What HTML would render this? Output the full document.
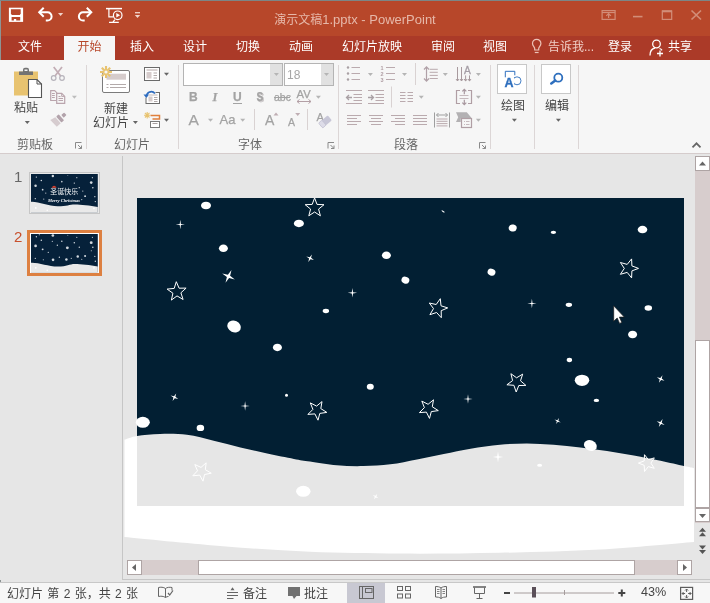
<!DOCTYPE html>
<html lang="zh-CN">
<head>
<meta charset="utf-8">
<title>演示文稿1.pptx - PowerPoint</title>
<style>
*{box-sizing:border-box;margin:0;padding:0}
html,body{width:710px;height:603px;overflow:hidden;background:#e6e6e6}
body{font-family:"Liberation Sans","Noto Sans CJK SC",sans-serif;font-size:12px;color:#444;position:relative}
.abs{position:absolute}
svg{position:absolute;overflow:visible}
#titlebar{left:0;top:0;width:710px;height:36px;background:#b7472a}
#tabrow{left:0;top:36px;width:710px;height:24px;background:#ab3a28}
#title{left:0;top:10.500px;width:710px;text-align:center;color:#e6b8a9;font-size:13px;line-height:18px;white-space:nowrap}
#title span{font-size:12px}
.tab{top:36px;height:24px;line-height:23px;color:#fff;font-size:12px;text-align:center;white-space:nowrap}
.tab.on{background:#f6f6f6;color:#b7472a}
#ribbon{left:0;top:60px;width:710px;height:94px;background:#f6f6f6;border-bottom:1px solid #d5cccc}
.glabel{top:137.500px;font-size:12px;color:#666;line-height:14px;white-space:nowrap;text-align:center}
.gsep{top:64.500px;width:1px;height:84px;background:#dcd6d6}
.rt{font-size:12px;color:#444;line-height:15px;white-space:nowrap;text-align:center}
#work{left:0;top:154px;width:710px;height:426px;background:#e6e6e6}
#status{left:0;top:582px;width:710px;height:21px;background:#f7f7f7;border-top:1px solid #c8c8c8}
.st{top:586px;font-size:12px;color:#444;line-height:15px;white-space:nowrap}
.sbtn{background:#fff;border:1px solid #aea4a4}
.trk{background:#d7cdcd}
.s5{fill:none;stroke:#fff;stroke-width:1}
.s4{fill:#fff}
.d{fill:#fff}
.num{font-size:15px;line-height:16px;color:#666}
</style>
</head>
<body>
<div id="all" style="position:absolute;left:0;top:0;width:710px;height:603px;will-change:transform">
<div id="titlebar" class="abs"></div>
<div id="tabrow" class="abs"></div>
<div id="title" class="abs"><span>演示文稿</span>1.pptx - PowerPoint</div>

<div class="abs tab" style="left:8px;width:44px">文件</div>
<div class="abs tab on" style="left:64px;width:51px">开始</div>
<div class="abs tab" style="left:120px;width:44px">插入</div>
<div class="abs tab" style="left:173px;width:44px">设计</div>
<div class="abs tab" style="left:226px;width:44px">切换</div>
<div class="abs tab" style="left:279px;width:44px">动画</div>
<div class="abs tab" style="left:332px;width:80px">幻灯片放映</div>
<div class="abs tab" style="left:421px;width:44px">审阅</div>
<div class="abs tab" style="left:473px;width:44px">视图</div>
<div class="abs tab" style="left:546px;width:50px;color:#f0cfc6">告诉我...</div>
<div class="abs tab" style="left:598px;width:44px">登录</div>
<div class="abs tab" style="left:665px;width:30px">共享</div>
<svg style="left:0;top:0" width="710" height="59" viewBox="0 0 710 59">
<!-- window borders -->
<rect x="0" y="0" width="710" height="1" fill="#7c8686"/>
<!-- save -->
<rect x="8.900" y="7.700" width="14.200" height="14.200" fill="#fff"/>
<path d="M10.900,9.200h9.800v4.200l-0.900,1.500h-8l-0.900,-1.500z" fill="#b7472a"/>
<path d="M11.600,17.100h8.600v3.400h-4v-1.400h-2.300v1.400h-2.300z" fill="#b7472a"/>
<!-- undo -->
<path d="M39.500,12.300h8a4.100,4.100 0 0 1 0,8.200h-1.700" fill="none" stroke="#fff" stroke-width="2"/>
<path d="M43.700,7.800l-4.500,4.500l4.500,4.500" fill="none" stroke="#fff" stroke-width="2"/>
<path d="M58,12.900h5.200l-2.600,3z" fill="#f1d4cb"/>
<!-- redo -->
<path d="M91,12.300h-8a4.100,4.100 0 0 0 0,8.200h1.700" fill="none" stroke="#fff" stroke-width="2"/>
<path d="M86.800,7.800l4.500,4.500l-4.500,4.500" fill="none" stroke="#fff" stroke-width="2"/>
<!-- slideshow from start -->
<g fill="none" stroke="#fff" stroke-width="1.200">
<path d="M106,8.600h16" stroke-width="1.500"/>
<path d="M108.900,9v7.900h4.200"/>
<path d="M114.800,19.600l-1.800,2.600M109,22.400h9.800"/>
<circle cx="117.700" cy="15.300" r="4.300"/>
</g>
<path d="M116.300,13l3.800,2.300l-3.800,2.300z" fill="#fff"/>
<!-- qat customize -->
<path d="M135,12.700h5" stroke="#f1d4cb" stroke-width="1.300"/>
<path d="M134.800,14.900h5.400l-2.700,3z" fill="#f1d4cb"/>
<!-- window controls -->
<g fill="none" stroke="#d28d78" stroke-width="1.200">
<rect x="602.100" y="10.600" width="13" height="8.800"/>
<path d="M602,12.500h13"/>
<path d="M608.600,18v-4.500M606.300,15.800l2.300,-2.300l2.300,2.300"/>
<path d="M633,16.600h9.500" stroke-width="1.600"/>
<rect x="662.300" y="11" width="9.400" height="8.400"/>
<path d="M662,11.300h10" stroke-width="2"/>
<path d="M691.500,10.500l9.500,9M701,10.500l-9.500,9" stroke-width="1.700"/>
</g>
<!-- lightbulb -->
<g fill="none" stroke="#ecc3b7" stroke-width="1.200">
<path d="M534.700,50v-1.500c0,-1.500 -2.200,-2.500 -2.200,-5a4.200,4.200 0 0 1 8.400,0c0,2.500 -2.200,3.500 -2.200,5v1.500z"/>
<path d="M534.800,52.500h3.800"/>
</g>
<!-- share person -->
<g fill="none" stroke="#fff" stroke-width="1.300">
<circle cx="656.500" cy="44" r="3.800"/>
<path d="M650,55.500c0,-4.500 2.500,-7 5,-7.500"/>
<path d="M659.500,48.500c1,0.300 2,1 2.500,1.800"/>
<path d="M660,50.500v6M657,53.500h6"/>
</g>
</svg>
<div class="abs" style="left:0;top:1px;width:1px;height:602px;background:#8d9494"></div>
<div id="ribbon" class="abs"></div>
<!-- group separators -->
<div class="abs gsep" style="left:86px"></div>
<div class="abs gsep" style="left:178px"></div>
<div class="abs gsep" style="left:338px"></div>
<div class="abs gsep" style="left:490px"></div>
<div class="abs gsep" style="left:534px"></div>
<div class="abs gsep" style="left:578px"></div>
<!-- labels -->
<div class="abs rt" style="left:5px;top:101.300px;width:42px">粘贴</div>
<div class="abs rt" style="left:90px;top:101.500px;width:52px">新建</div>
<div class="abs rt" style="left:92px;top:116.300px;width:38px">幻灯片</div>
<div class="abs rt" style="left:492px;top:99.300px;width:42px">绘图</div>
<div class="abs rt" style="left:536px;top:99.300px;width:42px">编辑</div>
<div class="abs glabel" style="left:14px;width:42px">剪贴板</div>
<div class="abs glabel" style="left:111px;width:42px">幻灯片</div>
<div class="abs glabel" style="left:235px;width:30px">字体</div>
<div class="abs glabel" style="left:391px;width:30px">段落</div>
<!-- font boxes -->
<div class="abs" style="left:183px;top:63px;width:100px;height:23px;background:#fff;border:1px solid #b4b4b4"></div>
<div class="abs" style="left:270px;top:64px;width:12px;height:21px;background:#e1e1e1"></div>
<div class="abs" style="left:284px;top:63px;width:50px;height:23px;background:#fff;border:1px solid #b4b4b4"></div>
<div class="abs" style="left:321px;top:64px;width:12px;height:21px;background:#e1e1e1"></div>
<div class="abs" style="left:287px;top:67.500px;font-size:12px;line-height:15px;color:#a6a6a6">18</div>
<!-- big buttons -->
<div class="abs" style="left:497px;top:64px;width:30px;height:30px;background:#fff;border:1px solid #c8c8c8"></div>
<div class="abs" style="left:541px;top:64px;width:30px;height:30px;background:#fff;border:1px solid #c8c8c8"></div>
<svg style="left:0;top:59px" width="710" height="95" viewBox="0 59 710 95">
<defs>
<path id="dd" d="M-2.500,-1.500h5l-2.500,3z"/>
<g id="dl"><path d="M0.500,6.500v-6h6" fill="none" stroke="#8a8a8a" stroke-width="1"/><path d="M3,3l3.500,3.500M6.500,3.500v3h-3" fill="none" stroke="#8a8a8a" stroke-width="1"/></g>
</defs>
<!-- paste -->
<rect x="14" y="71.500" width="24" height="24" fill="#e8c370"/>
<path d="M19,75v-3.500h4v-1.800a2,2 0 0 1 2,-2h2a2,2 0 0 1 2,2v1.800h4v3.500z" fill="#737373"/>
<rect x="24.500" y="69.500" width="3" height="1.500" fill="#f6f6f6"/>
<path d="M28.500,79.500h8.500l4.500,4.500v13.500h-13z" fill="#fff" stroke="#555" stroke-width="1.100"/>
<path d="M37,79.500v4.500h4.500" fill="none" stroke="#555" stroke-width="1"/>
<use href="#dd" x="27.300" y="122.500" fill="#666"/>
<!-- cut -->
<g fill="none" stroke="#c2adb5" stroke-width="1.700">
<path d="M53.700,67l7,9M62,67l-7,9"/></g>
<g fill="none" stroke="#b6b3bb" stroke-width="1.200"><circle cx="53.700" cy="78" r="2.300"/><circle cx="62" cy="78" r="2.300"/></g>
<!-- copy -->
<g fill="#f6f6f6" stroke="#baa5ad" stroke-width="1.200">
<path d="M50.700,90.700h4l2,2v7.800h-6z"/>
<path d="M56.700,93.400h5l3,3v7h-8z"/>
<path d="M61.700,93.400v3h3" fill="none" stroke-width="1"/>
<path d="M52,93.500h2.800M52,95.500h2.800M52,97.500h2.800M58.500,96.500h2M58.500,98.500h4.500M58.500,100.500h4.500" fill="none" stroke-width="1"/>
</g>
<use href="#dd" x="74.400" y="97.200" fill="#bdbdbd"/>
<!-- format painter -->
<g transform="translate(59.500 119) rotate(-42)"><rect x="4" y="-1.800" width="3.800" height="3.600" rx="0.700" fill="#b3a3ab"/><rect x="-0.900" y="-4" width="3.500" height="8" rx="0.800" fill="#b3a3ab"/><path d="M-2,-4v8h-5.200l-0.300,-9.500z" fill="#d6cccf"/></g>
<use href="#dl" x="75" y="142"/>
<!-- new slide -->
<rect x="102.500" y="70.500" width="27" height="22" rx="1.500" fill="#fff" stroke="#7b7b7b" stroke-width="1"/>
<rect x="106.500" y="73.700" width="19.500" height="6" fill="#d6cccc"/>
<path d="M106.500,84.500h2M110,84.500h16M106.500,87.500h2M110,87.500h16" stroke="#b3aaaa" stroke-width="1"/>
<g stroke="#e8c370" stroke-width="2.100"><circle cx="106" cy="72" r="3.500" fill="#f6f6f6" stroke="none"/><path d="M106,66v12M100,72h12M101.800,67.800l8.400,8.400M110.200,67.800l-8.400,8.400"/></g>
<circle cx="106" cy="72" r="1.600" fill="#f6f6f6"/>
<use href="#dd" x="135.400" y="122.500" fill="#666"/>
<!-- layout -->
<rect x="144.500" y="67.500" width="15" height="13" fill="#fff" stroke="#6a6a6a" stroke-width="1"/>
<rect x="146.500" y="72" width="5" height="6.500" fill="#d6cccc"/>
<rect x="146.500" y="69.200" width="11" height="1.600" fill="#d0c7c7"/><path d="M153.500,73h3.500M153.500,75.500h3.500M153.500,78h3.500" stroke="#b0a8a8" stroke-width="1"/>
<use href="#dd" x="166.500" y="74.200" fill="#666"/>
<!-- reset -->
<rect x="146" y="92.500" width="13.500" height="11" fill="#fff" stroke="#6a6a6a" stroke-width="1"/>
<rect x="148.500" y="96.500" width="4" height="5" fill="#d6cccc"/>
<path d="M148.500,95h9" stroke="#d0c7c7" stroke-width="1.300"/><path d="M154,97.500h3.500M154,99.500h3.500M154,101.500h3.500" stroke="#b0a8a8" stroke-width="1"/>
<path d="M146,97.500v-2.500a4,4 0 0 1 8,-1" fill="none" stroke="#f6f6f6" stroke-width="4"/>
<path d="M146.500,96.500c0,-4.500 5.500,-6.500 8.500,-3" fill="none" stroke="#2d6cc0" stroke-width="1.600"/>
<path d="M143.500,94.500h5.500l-2.700,3.500z" fill="#2d6cc0"/>
<!-- section -->
<path d="M150.500,115.500h9v3.500h-7" fill="none" stroke="#e07f3c" stroke-width="1.500"/>
<rect x="150.500" y="121.500" width="9" height="6" fill="#fff" stroke="#7a7a7a" stroke-width="1"/>
<path d="M152.500,123.500h5" stroke="#a9a0a0" stroke-width="1"/>
<g stroke="#e8c370" stroke-width="1.100"><path d="M147.200,112v6.400M144,115.200h6.400M144.900,112.900l4.600,4.600M149.500,112.900l-4.600,4.600"/></g>
<use href="#dd" x="166.500" y="120.200" fill="#666"/>
<!-- font box arrows -->
<use href="#dd" x="276.400" y="74.500" fill="#b5b5b5"/>
<use href="#dd" x="326.500" y="74.500" fill="#b5b5b5"/>
<!-- font row 2 -->
<g font-family="'Liberation Sans',sans-serif" fill="#a3a3a3" stroke="#a3a3a3" stroke-width="0.250">
<text x="189" y="101" font-size="12" font-weight="bold">B</text>
<text x="212.500" y="101" font-size="12.500" font-style="italic" font-weight="bold" font-family="'Liberation Serif',serif">I</text>
<text x="233" y="101" font-size="12" font-weight="bold">U</text>
<text x="257.600" y="102.200" font-size="12.300" font-weight="bold" fill="#d8d3d5" textLength="6.800" lengthAdjust="spacingAndGlyphs">S</text>
<text x="256.500" y="101" font-size="12.300" font-weight="bold" textLength="6.800" lengthAdjust="spacingAndGlyphs">S</text>
<text x="274" y="101" font-size="10.500">abc</text>
<text x="296.500" y="97.800" font-size="11.200">AV</text>
<text x="188.500" y="124.600" font-size="15.500">A</text>
<text x="219.500" y="124.300" font-size="13">Aa</text>
<text x="265" y="125.400" font-size="14">A</text>
<text x="288" y="125.500" font-size="10.500">A</text>
<text x="316.500" y="120.500" font-size="11">A</text>
</g>
<path d="M233,103.500h9" stroke="#a3a3a3" stroke-width="1"/>
<path d="M274,97.500h16" stroke="#a3a3a3" stroke-width="1"/>
<path d="M297,101.500h14M299.500,99.500l-2.500,2l2.500,2M308.500,99.500l2.500,2l-2.500,2" fill="none" stroke="#b39fa5" stroke-width="1"/>
<use href="#dd" x="318.400" y="97.200" fill="#b5b5b5"/>
<use href="#dd" x="210.500" y="120.200" fill="#b5b5b5"/>
<use href="#dd" x="242.700" y="120.200" fill="#b5b5b5"/>
<path d="M273.500,115.500h5l-2.500,-3z" fill="#bfaeb3"/>
<path d="M295.200,113h5l-2.500,3z" fill="#bfaeb3"/>
<path d="M254.500,109v21M307.500,109v21" stroke="#d9d2d2" stroke-width="1"/>
<g transform="rotate(-40 325 121.500)"><rect x="319" y="118.500" width="12" height="6.500" rx="1" fill="#c8c7d7"/><rect x="319" y="118.500" width="4.500" height="6.500" rx="1" fill="#dddce8" stroke="#c0bfd0" stroke-width="0.600"/></g>
<use href="#dl" x="327.500" y="142"/>
<!-- paragraph row 1 -->
<g stroke="#baaaae" stroke-width="1" fill="none">
<path d="M351.500,67.500h8.500M351.500,73.500h8.500M351.500,79.500h8.500"/>
<path d="M386,67.500h9M386,73.500h9M386,79.500h9"/>
<path d="M429.600,69.300h8.200M429.600,72.300h8.200M429.600,75.400h8.200M429.600,78.500h8.200"/>
</g>
<g fill="#a9a0a4"><circle cx="348" cy="67.500" r="1.200"/><circle cx="348" cy="73.500" r="1.200"/><circle cx="348" cy="79.500" r="1.200"/></g>
<g font-family="'Liberation Sans',sans-serif" font-size="5.500" font-weight="bold" fill="#b09ea4"><text x="380.500" y="69.500">1</text><text x="380.500" y="75.500">2</text><text x="380.500" y="81.500">3</text></g>
<use href="#dd" x="370.400" y="74.500" fill="#b5b5b5"/>
<use href="#dd" x="404.500" y="74.500" fill="#b5b5b5"/>
<path d="M415.500,63v22" stroke="#d9d2d2" stroke-width="1"/>
<path d="M426.500,67v14M424,69.500l2.500,-2.700l2.500,2.700M424,78.500l2.500,2.700l2.500,-2.700" fill="none" stroke="#b0a0a7" stroke-width="1.200"/>
<use href="#dd" x="445.300" y="74.500" fill="#b5b5b5"/>
<!-- text direction -->
<g fill="none" stroke="#a89a9e" stroke-width="1">
<path d="M457.500,67v14M461.500,67v14M456,79l1.500,2l1.500,-2M460,79l1.500,2l1.500,-2"/>
<path d="M465.600,75.400v5.800M469.500,75.400v5.800M464.100,79l1.500,2l1.500,-2M468,79l1.500,2l1.500,-2"/>
</g>
<text x="464" y="73.600" font-family="'Liberation Sans',sans-serif" font-size="10.200" fill="#a59ea6" stroke="#a59ea6" stroke-width="0.300">A</text>
<use href="#dd" x="478.400" y="74.500" fill="#b5b5b5"/>
<!-- paragraph row 2 -->
<g stroke="#baaaae" stroke-width="1" fill="none">
<path d="M346,90.500h16M353.500,94.500h8.500M353.500,97.500h8.500M353.500,100.500h8.500M346,103.500h16"/>
<path d="M368,90.500h16M375.500,94.500h8.500M375.500,97.500h8.500M375.500,100.500h8.500M368,103.500h16"/>
<path d="M400,92.500h5.500M407.500,92.500h5.500M400,95.500h5.500M407.500,95.500h5.500M400,98.500h5.500M407.500,98.500h5.500M400,101.500h5.500M407.500,101.500h5.500"/>
</g>
<g stroke="#a9a0a4" stroke-width="1.300" fill="none"><path d="M346.500,97.500h5.500M349,95l-2.500,2.500l2.500,2.500"/><path d="M368,97.500h5.500M371,95l2.500,2.500l-2.500,2.500"/></g>
<path d="M391.500,86.500v21" stroke="#d9d2d2" stroke-width="1"/>
<use href="#dd" x="421.300" y="97.200" fill="#b5b5b5"/>
<!-- align text -->
<g fill="none" stroke="#b09ea4" stroke-width="1.200">
<path d="M460,90.500h-3.500v13h3.500M468,90.500h3.500v13h-3.500"/>
</g>
<g fill="none" stroke="#a8989f" stroke-width="1.200"><path d="M464.300,89.300v5M462.300,91.300l2,-2l2,2M464.300,104.700v-5M462.300,102.700l2,2l2,-2"/><path d="M459.500,95.500h9M459.500,98.500h9" stroke="#c6babd"/></g>
<use href="#dd" x="478.400" y="97.200" fill="#b5b5b5"/>
<!-- paragraph row 3 -->
<g stroke="#baaaae" stroke-width="1" fill="none">
<path d="M347,115.500h14M347,118.500h10M347,121.500h14M347,124.500h10"/>
<path d="M369,115.500h14M371,118.500h10M369,121.500h14M371,124.500h10"/>
<path d="M391,115.500h14M395,118.500h10M391,121.500h14M395,124.500h10"/>
<path d="M413,115.500h14M413,118.500h14M413,121.500h14M413,124.500h14"/>
<path d="M436.500,119h11M436.500,121.300h11M436.500,123.600h11M436.500,125.900h11"/>
</g>
<g stroke="#9f9f9f" stroke-width="1" fill="none"><path d="M434.500,112.500v15M449.500,112.500v15"/><path d="M436.500,115h11M438.500,113l-2,2l2,2M445.500,113l2,2l-2,2"/></g>
<!-- smartart -->
<path d="M456,112.300h10.800l4.400,5.200v1h-10.500v3.500h-4.700l2.200,-4.800z" fill="#b3b1b3"/>
<rect x="461.500" y="118.500" width="10" height="9" fill="#f6f6f6" stroke="#b09ea4" stroke-width="1.200"/>
<path d="M464,121.500h1M466,121.500h3.500M464,124.500h1M466,124.500h3.500" stroke="#c6babd" stroke-width="1"/>
<use href="#dd" x="478.400" y="120.200" fill="#b5b5b5"/>
<use href="#dl" x="479" y="142"/>
<!-- drawing -->
<path d="M505.300,79.700v-8.400h9.500v4" fill="none" stroke="#2e6fbe" stroke-width="1"/>
<circle cx="517" cy="80.800" r="4" fill="none" stroke="#2e6fbe" stroke-width="0.900"/>
<rect x="504" y="77.300" width="10" height="10" fill="#fff"/>
<text x="504.600" y="86.800" font-family="'Liberation Sans',sans-serif" font-size="12.500" font-weight="bold" fill="#2e6fbe" stroke="#2e6fbe" stroke-width="0.350">A</text>
<use href="#dd" x="514.400" y="120.200" fill="#666"/>
<!-- editing -->
<circle cx="558.300" cy="77.700" r="4" fill="none" stroke="#2e6fbe" stroke-width="1.800"/>
<path d="M555.300,80.500l-4,3" stroke="#2e6fbe" stroke-width="2.600" stroke-linecap="round"/>
<use href="#dd" x="558.400" y="120.200" fill="#666"/>
<!-- collapse -->
<path d="M692.500,147.300l4,-4l4,4" fill="none" stroke="#666" stroke-width="1.800"/>
</svg>
<div id="work" class="abs"></div>
<!-- thumbnail panel -->
<div class="abs" style="left:122px;top:156px;width:1px;height:424px;background:#c6c6c6"></div>
<div class="abs" style="left:122px;top:579px;width:588px;height:1px;background:#c6c6c6"></div>
<div class="abs num" style="left:14px;top:169px">1</div>
<div class="abs num" style="left:14px;top:229px;color:#c8502d">2</div>
<div class="abs" style="left:29px;top:172px;width:71px;height:42px;background:#e9e9e9;border:1px solid #c6c6c6"></div>
<div class="abs" style="left:27px;top:230px;width:75px;height:46px;background:#fff;border:3px solid #dd8041"></div>
<svg style="left:31.200px;top:173.900px" width="66.800" height="38.200" viewBox="0 0 70 40" preserveAspectRatio="none">
<rect width="70" height="40" fill="#06213a"/>
<path d="M0,29.200C8,28.800 18,33.900 28,33.900S40,31.900 46,31.900S62,33 70,34.500V40H0Z" fill="#e9e9e9"/>
<g fill="#d2d8de"><circle cx="4.8" cy="12.2" r="1.3"/><circle cx="22.9" cy="2.2" r="1.3"/><circle cx="63.1" cy="9.0" r="1.4"/><circle cx="12.2" cy="16.4" r="0.9"/><circle cx="56.7" cy="23.2" r="1.0"/><circle cx="10.8" cy="6.9" r="0.8"/><circle cx="5.6" cy="3.2" r="0.7"/><circle cx="32.3" cy="8.0" r="0.8"/><circle cx="45.4" cy="9.5" r="0.7"/><circle cx="50.6" cy="14.3" r="0.7"/><circle cx="64.8" cy="14.3" r="0.8"/><circle cx="66.9" cy="23.7" r="0.7"/><circle cx="48.0" cy="3.8" r="0.6"/><circle cx="4.5" cy="25.8" r="0.7"/><circle cx="13.4" cy="26.3" r="0.6"/><circle cx="53.2" cy="26.8" r="0.6"/><circle cx="67.4" cy="28.9" r="0.7"/><circle cx="38.6" cy="1.7" r="0.5"/><circle cx="64.3" cy="3.8" r="0.6"/><circle cx="15.5" cy="20.0" r="0.6"/><circle cx="54.3" cy="17.9" r="0.6"/></g>
<g fill="#fff"><circle cx="5" cy="35.500" r="0.900"/><circle cx="17" cy="38" r="0.800"/><circle cx="66" cy="36" r="0.900"/></g>
<path d="M21.500,14.500q2.700,-4.600 5.400,0z" fill="#d8402f"/>
<text x="20.100" y="21.300" font-size="7.300" fill="#f2f4f6" textLength="29.300" lengthAdjust="spacingAndGlyphs" font-family="'Liberation Sans','Noto Sans CJK SC',sans-serif">圣诞快乐</text>
<text x="17.700" y="28.900" font-size="4.800" fill="#f2f4f6" font-style="italic" font-weight="bold" textLength="33.700" lengthAdjust="spacingAndGlyphs" font-family="'Liberation Serif',serif">Merry Christmas</text>
</svg>
<svg style="left:31.200px;top:234.200px" width="66.800" height="37.600" viewBox="0 0 70 39.400" preserveAspectRatio="none">
<rect width="70" height="40" fill="#06213a"/>
<path d="M0,30.100C8,29.700 18,34.100 28,34.100S40,31.400 46,31.400S62,32.500 70,34.100V40H0Z" fill="#e9e9e9"/>
<g fill="#d2d8de"><circle cx="4.8" cy="12.5" r="1.4"/><circle cx="22.9" cy="1.6" r="1.4"/><circle cx="38.1" cy="14.5" r="1.5"/><circle cx="63.1" cy="9.1" r="1.5"/><circle cx="12.2" cy="16.1" r="1.0"/><circle cx="23.1" cy="27.1" r="1.4"/><circle cx="37.1" cy="26.8" r="1.3"/><circle cx="49.0" cy="23.7" r="1.3"/><circle cx="56.7" cy="23.1" r="1.1"/><circle cx="10.8" cy="6.5" r="0.8"/><circle cx="5.6" cy="2.9" r="0.7"/><circle cx="8.7" cy="0.8" r="0.6"/><circle cx="32.3" cy="7.7" r="0.8"/><circle cx="45.4" cy="9.2" r="0.8"/><circle cx="27.6" cy="11.8" r="0.7"/><circle cx="18.1" cy="19.2" r="0.7"/><circle cx="29.7" cy="24.4" r="0.7"/><circle cx="50.6" cy="13.9" r="0.7"/><circle cx="64.8" cy="13.9" r="0.8"/><circle cx="66.9" cy="23.4" r="0.7"/><circle cx="63.2" cy="17.6" r="0.6"/><circle cx="48.0" cy="3.5" r="0.6"/><circle cx="4.5" cy="25.5" r="0.7"/><circle cx="12.9" cy="27.0" r="0.6"/><circle cx="42.2" cy="25.5" r="0.6"/><circle cx="53.2" cy="26.5" r="0.6"/><circle cx="67.4" cy="28.6" r="0.7"/><circle cx="22.3" cy="7.7" r="0.6"/><circle cx="38.6" cy="1.4" r="0.5"/><circle cx="64.3" cy="3.5" r="0.6"/></g>
<g fill="#fff"><circle cx="5" cy="35.500" r="0.900"/><circle cx="17" cy="38" r="0.800"/><circle cx="66" cy="35.500" r="0.900"/></g>
</svg>
<!-- slide + snow -->
<svg style="left:0;top:0" width="710" height="603" viewBox="0 0 710 603">
<defs><clipPath id="sc"><rect x="137" y="198" width="547" height="308"/></clipPath></defs>
<path d="M124.5,439.6C126.6,439.0 131.2,436.8 137.1,435.9C143.0,435.0 151.8,434.2 160.1,434.0C168.4,433.8 178.0,433.7 186.9,434.8C195.8,435.9 204.8,438.6 213.7,440.7C222.6,442.8 231.5,445.3 240.4,447.4C249.3,449.5 258.3,451.6 267.2,453.5C276.1,455.4 286.8,457.5 293.9,458.9C301.0,460.2 302.9,460.5 310.0,461.6C317.1,462.7 327.9,464.6 336.8,465.3C345.7,466.1 354.6,466.3 363.5,466.1C372.4,465.9 381.4,465.4 390.3,464.3C399.2,463.2 408.1,461.1 417.0,459.4C425.9,457.7 434.9,455.9 443.8,454.1C452.7,452.3 461.2,450.3 470.6,448.7C480.0,447.1 490.6,445.6 500.0,444.7C509.4,443.8 517.9,443.4 526.8,443.4C535.7,443.4 544.6,444.0 553.5,444.7C562.4,445.4 571.4,446.4 580.3,447.4C589.2,448.4 598.1,449.6 607.0,450.9C615.9,452.2 624.9,453.8 633.8,455.4C642.7,457.0 652.2,459.0 660.6,460.8C669.0,462.6 678.5,464.9 684.1,466.1C689.7,467.3 692.4,467.9 694.0,468.2L694.0,542.0C678.3,543.2 632.3,547.7 600.0,549.5C567.7,551.3 533.3,552.1 500.0,552.8C466.7,553.5 431.7,553.8 400.0,553.6C368.3,553.4 340.0,553.1 310.0,551.8C280.0,550.5 250.9,548.5 220.0,546.0C189.1,543.5 140.4,538.5 124.5,537.0Z" fill="#fff"/>
<rect x="137" y="198" width="547" height="308" fill="#021f33"/>
<path d="M124.5,439.6C126.6,439.0 131.2,436.8 137.1,435.9C143.0,435.0 151.8,434.2 160.1,434.0C168.4,433.8 178.0,433.7 186.9,434.8C195.8,435.9 204.8,438.6 213.7,440.7C222.6,442.8 231.5,445.3 240.4,447.4C249.3,449.5 258.3,451.6 267.2,453.5C276.1,455.4 286.8,457.5 293.9,458.9C301.0,460.2 302.9,460.5 310.0,461.6C317.1,462.7 327.9,464.6 336.8,465.3C345.7,466.1 354.6,466.3 363.5,466.1C372.4,465.9 381.4,465.4 390.3,464.3C399.2,463.2 408.1,461.1 417.0,459.4C425.9,457.7 434.9,455.9 443.8,454.1C452.7,452.3 461.2,450.3 470.6,448.7C480.0,447.1 490.6,445.6 500.0,444.7C509.4,443.8 517.9,443.4 526.8,443.4C535.7,443.4 544.6,444.0 553.5,444.7C562.4,445.4 571.4,446.4 580.3,447.4C589.2,448.4 598.1,449.6 607.0,450.9C615.9,452.2 624.9,453.8 633.8,455.4C642.7,457.0 652.2,459.0 660.6,460.8C669.0,462.6 678.5,464.9 684.1,466.1C689.7,467.3 692.4,467.9 694.0,468.2L694.0,542.0C678.3,543.2 632.3,547.7 600.0,549.5C567.7,551.3 533.3,552.1 500.0,552.8C466.7,553.5 431.7,553.8 400.0,553.6C368.3,553.4 340.0,553.1 310.0,551.8C280.0,550.5 250.9,548.5 220.0,546.0C189.1,543.5 140.4,538.5 124.5,537.0Z" fill="#e6e6e6" clip-path="url(#sc)"/>
<ellipse class="d" cx="206" cy="205.5" rx="5" ry="3.75"/>
<ellipse class="d" cx="298.9" cy="223.4" rx="5" ry="3.75"/>
<ellipse class="d" cx="223.4" cy="248.3" rx="4.5" ry="3.75"/>
<ellipse class="d" cx="386.4" cy="255.3" rx="4.5" ry="3.75"/>
<ellipse class="d" cx="405.4" cy="280.2" rx="4" ry="3.4" transform="rotate(20 405.4 280.2)"/>
<ellipse class="d" cx="491.5" cy="272.2" rx="4" ry="3.4" transform="rotate(20 491.5 272.2)"/>
<ellipse class="d" cx="325.9" cy="311" rx="3.2" ry="2.15"/>
<ellipse class="d" cx="512.7" cy="228" rx="4" ry="3.5" transform="rotate(15 512.7 228)"/>
<ellipse class="d" cx="553.4" cy="232.3" rx="2.7" ry="1.6"/>
<ellipse class="d" cx="642.5" cy="229.6" rx="4.8" ry="3.75"/>
<ellipse class="d" cx="568.9" cy="304.8" rx="3.2" ry="2.15"/>
<ellipse class="d" cx="648.3" cy="308" rx="3.75" ry="2.7"/>
<ellipse class="d" cx="234.1" cy="326.5" rx="7" ry="5.75" transform="rotate(25 234.1 326.5)"/>
<ellipse class="d" cx="277.4" cy="347.4" rx="4.5" ry="3.75"/>
<ellipse class="d" cx="286.5" cy="395.3" rx="1.5" ry="1.5"/>
<ellipse class="d" cx="142.8" cy="422.3" rx="7" ry="5.5"/>
<ellipse class="d" cx="200.4" cy="427.9" rx="3.75" ry="3.2"/>
<ellipse class="d" cx="370.3" cy="386.7" rx="3.5" ry="3"/>
<ellipse class="d" cx="632.6" cy="334.5" rx="4.5" ry="3.75"/>
<ellipse class="d" cx="569.4" cy="360" rx="2.7" ry="2.15"/>
<ellipse class="d" cx="582" cy="380.3" rx="7.25" ry="5.6"/>
<ellipse class="d" cx="596.4" cy="400.4" rx="2.7" ry="1.6"/>
<ellipse class="d" cx="303.3" cy="491.3" rx="7.25" ry="5.5"/>
<ellipse class="d" cx="590.4" cy="445.5" rx="6.7" ry="5.25" transform="rotate(25 590.4 445.5)"/>
<ellipse class="d" cx="539.6" cy="465.3" rx="2.5" ry="1.5"/>
<ellipse class="d" cx="443.1" cy="211.4" rx="1.8" ry="0.6" transform="rotate(30 443.1 211.4)"/>
<polygon class="s4" points="180.3,219.8 180.9,223.9 185.0,224.5 180.9,225.1 180.3,229.2 179.7,225.1 175.6,224.5 179.7,223.9"/>
<polygon class="s4" points="352.4,288.1 353.0,292.2 357.1,292.8 353.0,293.4 352.4,297.5 351.8,293.4 347.7,292.8 351.8,292.2"/>
<polygon class="s4" points="531.9,298.8 532.5,302.9 536.6,303.5 532.5,304.1 531.9,308.2 531.3,304.1 527.2,303.5 531.3,302.9"/>
<polygon class="s4" points="245.1,401.3 245.7,405.4 249.8,406.0 245.7,406.6 245.1,410.7 244.5,406.6 240.4,406.0 244.5,405.4"/>
<polygon class="s4" points="468.0,394.3 468.6,398.4 472.7,399.0 468.6,399.6 468.0,403.7 467.4,399.6 463.3,399.0 467.4,398.4"/>
<polygon class="s4" points="498.0,451.6 498.8,456.2 503.4,457.0 498.8,457.8 498.0,462.4 497.2,457.8 492.6,457.0 497.2,456.2"/>
<polygon class="s4" points="311.9,254.4 311.1,257.8 313.9,260.0 310.5,259.2 308.3,262.0 309.1,258.6 306.3,256.4 309.7,257.2"/>
<polygon class="s4" points="231.5,270.1 230.1,275.8 234.8,279.4 229.1,278.0 225.5,282.7 226.9,277.0 222.2,273.4 227.9,274.8"/>
<polygon class="s4" points="176.2,393.4 175.4,396.8 178.2,399.0 174.8,398.2 172.6,401.0 173.4,397.6 170.6,395.4 174.0,396.2"/>
<polygon class="s4" points="662.5,375.2 661.7,378.6 664.5,380.8 661.1,380.0 658.9,382.8 659.7,379.4 656.9,377.2 660.3,378.0"/>
<polygon class="s4" points="559.0,417.9 558.4,420.7 560.7,422.4 557.9,421.8 556.2,424.1 556.8,421.3 554.5,419.6 557.3,420.2"/>
<polygon class="s4" points="662.6,419.1 661.7,422.7 664.7,425.0 661.1,424.1 658.8,427.1 659.7,423.5 656.7,421.2 660.3,422.1"/>
<polygon class="s4" points="377.3,493.7 376.4,496.4 378.5,498.3 375.8,497.4 373.9,499.5 374.8,496.8 372.7,494.9 375.4,495.8"/>
<polygon class="s5" points="176.3,281.7 179.1,288.2 186.1,288.1 180.9,292.8 183.1,299.5 177.0,295.9 171.4,300.1 172.9,293.2 167.1,289.1 174.2,288.4"/>
<polygon class="s5" points="314.6,197.9 317.0,204.4 324.0,204.7 318.6,209.1 320.4,215.8 314.6,212.0 308.8,215.8 310.6,209.1 305.2,204.7 312.2,204.4"/>
<polygon class="s5" points="440.3,298.7 441.0,305.8 447.7,307.9 441.2,310.7 441.3,317.7 436.6,312.5 429.9,314.7 433.5,308.6 429.3,303.0 436.2,304.5"/>
<polygon class="s5" points="631.6,258.9 631.9,265.9 638.5,268.4 631.9,270.9 631.6,277.9 627.2,272.4 620.4,274.3 624.3,268.4 620.4,262.5 627.2,264.4"/>
<polygon class="s5" points="322.0,401.6 320.8,408.6 326.8,412.4 319.8,413.4 318.0,420.2 314.9,413.9 307.9,414.4 312.9,409.4 310.3,402.9 316.6,406.1"/>
<polygon class="s5" points="433.5,399.8 432.3,406.8 438.3,410.6 431.3,411.6 429.5,418.4 426.4,412.1 419.4,412.6 424.4,407.6 421.8,401.1 428.1,404.3"/>
<polygon class="s5" points="522.7,374.1 520.5,380.8 525.9,385.4 518.8,385.5 516.2,392.0 513.9,385.3 506.9,384.8 512.6,380.6 510.9,373.7 516.6,377.8"/>
<polygon class="s5" points="206.2,462.8 205.3,469.7 211.3,473.2 204.5,474.5 203.0,481.2 199.7,475.1 192.8,475.8 197.5,470.8 194.8,464.5 201.0,467.4"/>
<polygon class="s5" points="644.5,454.7 648.3,459.6 654.3,457.9 650.9,463.1 654.3,468.3 648.3,466.6 644.5,471.5 644.2,465.3 638.4,463.1 644.2,460.9"/>
<path d="M613.700,305.800V321.300L617.200,318L619.600,323.400L621.800,322.400L619.400,317.100H624.300Z" fill="#fff" stroke="#1a1a1a" stroke-width="0.700"/>
</svg>
<!-- vertical scrollbar -->
<div class="abs trk" style="left:695px;top:156px;width:15px;height:367px"></div>
<div class="abs sbtn" style="left:695px;top:156px;width:15px;height:15px"></div>
<div class="abs sbtn" style="left:695px;top:340px;width:15px;height:167.500px"></div>
<div class="abs sbtn" style="left:695px;top:508.300px;width:15px;height:14.200px"></div>
<svg style="left:695px;top:156px" width="15" height="400" viewBox="0 0 15 400">
<path d="M4,9.500L7.500,5.500L11,9.500Z" fill="#666"/>
<path d="M4,358L7.500,362L11,358Z" fill="#666"/>
<path d="M4,375.700L7.500,371.700L11,375.700ZM4,380.200L7.500,376.200L11,380.200Z" fill="#555"/>
<path d="M4,389.500L7.500,393.500L11,389.500ZM4,394L7.500,398L11,394Z" fill="#555"/>
</svg>
<!-- horizontal scrollbar -->
<div class="abs trk" style="left:127px;top:560px;width:565px;height:15px"></div>
<div class="abs sbtn" style="left:127px;top:560px;width:15px;height:15px"></div>
<div class="abs sbtn" style="left:198px;top:560px;width:437px;height:15px"></div>
<div class="abs sbtn" style="left:677px;top:560px;width:15px;height:15px"></div>
<svg style="left:127px;top:560px" width="565" height="15" viewBox="0 0 565 15">
<path d="M9,4L5,7.500L9,11Z" fill="#666"/>
<path d="M556,4L560,7.500L556,11Z" fill="#666"/>
</svg>
<div id="status" class="abs"></div>
<div class="abs" style="left:347px;top:583px;width:38px;height:20px;background:#c8c8d2"></div>
<div class="abs st" style="left:7px;top:587.300px;word-spacing:1px">幻灯片 第 2 张，共 2 张</div>
<div class="abs st" style="left:243px;top:587px">备注</div>
<div class="abs st" style="left:304px;top:587px">批注</div>
<div class="abs st" style="left:641px;top:585.200px;font-size:12.600px">43%</div>
<svg style="left:0;top:582px" width="710" height="21" viewBox="0 582 710 21">
<!-- spell book -->
<g fill="none" stroke="#666" stroke-width="1">
<path d="M165.500,588.500c-2,-1.500 -5,-1.500 -7,-1v9c2,-0.500 5,-0.500 7,1z"/>
<path d="M165.500,588.500c1.500,-1.200 4,-1.500 6.500,-1v3M165.500,597.500c1,-0.800 2,-1 3,-1"/>
<path d="M168,593l1.700,2l3.300,-4.500" stroke-width="1.200"/>
</g>
<!-- notes -->
<path d="M230.500,590.200l2,-3l2,3z" fill="#666"/><path d="M227,592.500h11M227,595.500h11M227,598.500h6.500" fill="none" stroke="#666" stroke-width="1"/>
<!-- comment -->
<path d="M288,587h12v9h-3.500l-2.500,3l-1.500,-3h-4.500z" fill="#717171"/>
<!-- normal view -->
<g fill="none" stroke="#666" stroke-width="1">
<rect x="359.500" y="586.500" width="14" height="12"/>
<path d="M362.500,586.500v12"/>
<rect x="365.500" y="588.500" width="6.500" height="4"/>
</g>
<!-- sorter -->
<g fill="none" stroke="#666" stroke-width="1">
<rect x="397.500" y="586.500" width="5" height="4"/><rect x="405.500" y="586.500" width="5" height="4"/>
<rect x="397.500" y="594" width="5" height="4"/><rect x="405.500" y="594" width="5" height="4"/>
</g>
<!-- reading -->
<g fill="none" stroke="#666" stroke-width="1">
<path d="M441,588c-1.500,-1.300 -3.500,-1.500 -5.500,-1.500v10.500c2,0 4,0.200 5.500,1.500c1.500,-1.300 3.500,-1.500 5.500,-1.500v-10.500c-2,0 -4,0.200 -5.500,1.500zM441,588v10.500"/>
<path d="M437,589.500h2.500M437,591.500h2.500M437,593.500h2.500M442.500,589.500h2.500M442.500,591.500h2.500M442.500,593.500h2.500" stroke-width="0.800"/>
</g>
<!-- slideshow -->
<g fill="none" stroke="#666" stroke-width="1">
<path d="M473,587h13" stroke-width="1.600"/>
<path d="M474.500,587.500v6h10v-6"/>
<path d="M479.500,593.500v4.500M476.500,598.500h6"/>
</g>
<!-- zoom -->
<path d="M504,593h6" stroke="#444" stroke-width="2"/>
<path d="M514,593h100" stroke="#a59c9c" stroke-width="1"/>
<path d="M564.500,590v5" stroke="#a59c9c" stroke-width="1"/>
<rect x="532" y="587" width="4" height="10.500" fill="#5b5059"/>
<path d="M618.300,593h7M621.800,589.500v7" stroke="#444" stroke-width="2"/>
<!-- fit -->
<g fill="none" stroke="#5c5c5c" stroke-width="1.200">
<rect x="680.600" y="587.400" width="12" height="12"/>
<path d="M686.600,589v3M685.100,590.500l1.500,-1.500l1.500,1.500M686.600,598v-3M685.100,596.500l1.500,1.500l1.500,-1.500M682.100,593.500h3M683.600,592l-1.500,1.500l1.500,1.500M691.100,593.500h-3M689.600,592l1.500,1.500l-1.500,1.500" stroke-width="1"/>
</g>
</svg>
</div>
</body>
</html>
